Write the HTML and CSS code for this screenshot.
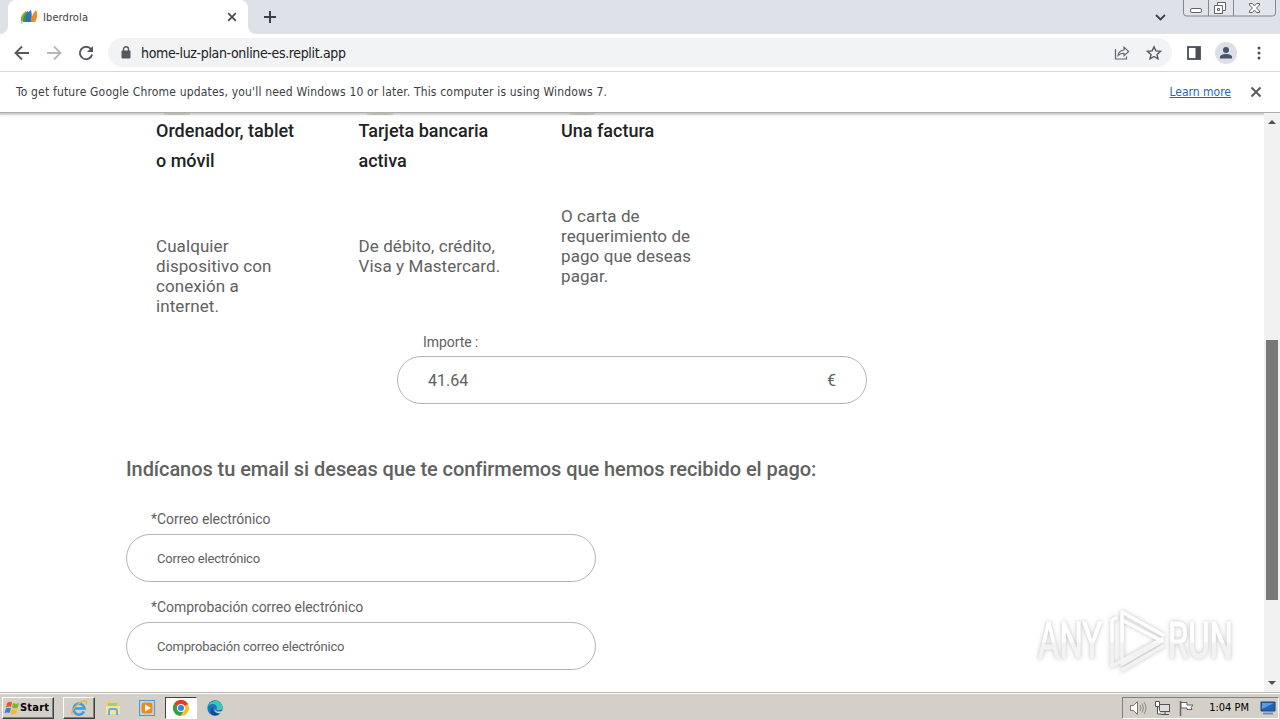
FILE: index.html
```html
<!DOCTYPE html>
<html lang="es">
<head>
    <meta charset="UTF-8">
    <meta name="viewport" content="width=device-width, initial-scale=1.0">
    <title>Iberdrola</title>
    <link rel="stylesheet" href="styles.css">
</head>
<body>
    <div class="screen">
        <!-- Tab strip -->
        <div class="tab-strip">
            <div class="strip-left"></div>
            <div class="tab">
                <svg class="favicon" width="18" height="16" viewBox="0 0 18 16">
                    <path d="M1 12C0 8 3 4 6 2c2 3 1 8 0 11z" fill="#7fae3c"/>
                    <path d="M3 13C3 8 5 4 8 2l1 11z" fill="#3f8f55"/>
                    <path d="M6 13C5 8 7 3 11 1c1 4 1 9 0 12z" fill="#3173b5"/>
                    <path d="M11 13c0-5 2-9 5-12 2 4 1 9-1 12z" fill="#f08a1d"/>
                    <path d="M1.500 12l.5 3" stroke="#9ab88a" fill="none"/>
                </svg>
                <span class="tab-title">Iberdrola</span>
                <svg class="tab-close" width="10" height="10" viewBox="0 0 10 10"><path d="M1.200 1.200l7.600 7.600M8.800 1.200L1.200 8.800" stroke="#45494d" stroke-width="1.700"/></svg>
            </div>
            <div class="strip-right">
                <svg class="new-tab" width="12" height="12" viewBox="0 0 12 12"><path d="M6 0v12M0 6h12" stroke="#3c4043" stroke-width="2"/></svg>
                <svg class="tab-search" width="11" height="7" viewBox="0 0 11 7"><path d="M1 1l4.500 4.500L10 1" fill="none" stroke="#3c4043" stroke-width="1.800"/></svg>
                <svg class="window-buttons" width="94" height="17" viewBox="0 0 94 17">
                    <path d="M.5 0v13q0 3 3 3h86q3 0 3-3V0M25.500 0v16M50.500 0v16" fill="#e1e4ea" stroke="#85888e"/>
                    <rect x="7.500" y="8.500" width="11" height="4" rx="1.500" fill="#fff" stroke="#60646a"/>
                    <path d="M34.500 2.500h8v8h-3v3h-8v-8h3z" fill="#fff" stroke="#60646a"/>
                    <path d="M34.500 5.500h5v5M34.500 8.500h2v2h-2z" fill="none" stroke="#60646a"/>
                    <path d="M66.500 3.500h3l2 2.500 2-2.500h3v1.500l-3 3 3 3v1.500h-3l-2-2.500-2 2.500h-3V11l3-3-3-3z" fill="#fff" stroke="#60646a"/>
                </svg>
            </div>
        </div>

        <!-- Toolbar -->
        <div class="toolbar">
            <svg class="back" width="16" height="16" viewBox="0 0 16 16"><path d="M15 8H2M8 1.500L1.500 8 8 14.500" fill="none" stroke="#55585c" stroke-width="1.800"/></svg>
            <svg class="forward" width="16" height="16" viewBox="0 0 16 16"><path d="M1 8h13M8 1.500L14.500 8 8 14.500" fill="none" stroke="#b5b7ba" stroke-width="1.800"/></svg>
            <svg class="reload" width="16" height="16" viewBox="0 0 16 16"><path d="M13 4.200A6.200 6.200 0 1 0 14.100 9.500" fill="none" stroke="#55585c" stroke-width="1.900"/><path d="M15 1v6H9z" fill="#55585c"/></svg>
            <div class="address-bar">
                <svg class="lock" width="10" height="13" viewBox="0 0 10 13"><rect x=".5" y="4.500" width="9" height="8" rx="1" fill="#55585c"/><path d="M2.500 5V3.300a2.500 2.500 0 0 1 5 0V5" fill="none" stroke="#55585c" stroke-width="1.400"/></svg>
                <span class="url">home-luz-plan-online-es.replit.app</span>
                <svg class="share" width="16" height="14" viewBox="0 0 16 14"><path d="M1.500 3v10h11v-2.500" fill="none" stroke="#5f6368" stroke-width="1.200"/><path d="M4 9.500C4.500 6 7 4.200 10 4V1.200l4.700 4.300L10 9.700V7.200C7.500 7.200 5.500 8 4 9.500z" fill="none" stroke="#5f6368" stroke-width="1.100"/></svg>
                <svg class="star" width="16" height="16" viewBox="0 0 16 16"><path d="M8 1.800l1.900 4.100 4.500.5-3.400 3 1 4.400L8 11.500l-4 2.300 1-4.400-3.400-3 4.500-.5z" fill="none" stroke="#55585c" stroke-width="1.400"/></svg>
            </div>
            <svg class="side-panel" width="14" height="14" viewBox="0 0 14 14"><rect x="1" y="1" width="12" height="12" fill="none" stroke="#4b4e52" stroke-width="1.800"/><path d="M8.500 1H13v12H8.500z" fill="#4b4e52"/></svg>
            <svg class="profile" width="22" height="22" viewBox="0 0 22 22"><circle cx="11" cy="11" r="11" fill="#dcdfe5"/><circle cx="11" cy="8" r="3" fill="#46536b"/><path d="M5 16.500v-1.500c0-4 12-4 12 0v1.500z" fill="#46536b"/></svg>
            <svg class="dots" width="4" height="14" viewBox="0 0 4 14"><g fill="#4b4e52"><circle cx="2" cy="2" r="1.500"/><circle cx="2" cy="7" r="1.500"/><circle cx="2" cy="12" r="1.500"/></g></svg>
        </div>

        <div class="infobar">
            <span class="infobar-text">To get future Google Chrome updates, you'll need Windows 10 or later. This computer is using Windows 7.</span>
            <a class="learn-more">Learn more</a>
            <svg class="infobar-close" width="12" height="12" viewBox="0 0 12 12"><path d="M1.500 1.500l9 9M10.500 1.500l-9 9" stroke="#55585c" stroke-width="1.800"/></svg>
        </div>

        <!-- Page -->
        <div class="viewport">
            <div class="page">
                <div class="requirements">
                    <div class="requirement">
                        <h3>Ordenador, tablet<br>o móvil</h3>
                        <p>Cualquier<br>dispositivo con<br>conexión a<br>internet.</p>
                    </div>
                    <div class="requirement">
                        <h3>Tarjeta bancaria<br>activa</h3>
                        <p>De débito, crédito,<br>Visa y Mastercard.</p>
                    </div>
                    <div class="requirement">
                        <h3>Una factura</h3>
                        <p>O carta de<br>requerimiento de<br>pago que deseas<br>pagar.</p>
                    </div>
                </div>
                <div class="field amount">
                    <label>Importe :</label>
                    <div class="input"><span>41.64</span><span>€</span></div>
                </div>
                <h2>Indícanos tu email si deseas que te confirmemos que hemos recibido el pago:</h2>
                <div class="field">
                    <label>*Correo electrónico</label>
                    <div class="input"><span class="placeholder">Correo electrónico</span></div>
                </div>
                <div class="field">
                    <label>*Comprobación correo electrónico</label>
                    <div class="input"><span class="placeholder">Comprobación correo electrónico</span></div>
                </div>
            </div>
            <div class="scrollbar">
                <svg class="arrow" width="8" height="4" viewBox="0 0 8 4"><path d="M0 4l4-4 4 4z" fill="#505050"/></svg>
                <div class="thumb"></div>
                <svg class="arrow" width="8" height="4" viewBox="0 0 8 4"><path d="M0 0l4 4 4-4z" fill="#505050"/></svg>
            </div>
            <svg class="watermark" width="234" height="80" viewBox="0 0 234 80">
                <defs>
                    <linearGradient id="fade" gradientUnits="userSpaceOnUse" x1="0" y1="0" x2="0" y2="80">
                        <stop offset="0.52" stop-color="#fff"/>
                        <stop offset="0.54" stop-color="#f3f3f3"/>
                        <stop offset="1" stop-color="#f3f3f3"/>
                    </linearGradient>
                </defs>
                <g class="watermark-text" fill="url(#fade)" stroke="url(#fade)">
                    <text x="8" y="58" textLength="64" lengthAdjust="spacingAndGlyphs">ANY</text>
                    <text x="138" y="58" textLength="65" lengthAdjust="spacingAndGlyphs">RUN</text>
                </g>
                <path class="watermark-logo" stroke="url(#fade)" d="M92 58V12l41 23M92 20l40 21-40 23M86 18l-4 2v46l50-27M92 70l41-24"/>
            </svg>
        </div>

        <!-- Taskbar -->
        <div class="taskbar">
            <div class="start">
                <svg width="16" height="16" viewBox="0 0 16 16"><path d="M3 3q3-2 5-.5L7 7Q5 6 2 7.500z" fill="#e8562a"/><path d="M9 3q3 1.500 6 0l-1.500 5Q11 9 8 7.500z" fill="#7db734"/><path d="M2 8.500Q5 7 7 8.500L5.500 13Q3 12 .5 13z" fill="#3a7fd0"/><path d="M8 9q3 1.300 5.500 0L12 14q-3 1-5.500-.5z" fill="#f6bb25"/></svg>
                <span>Start</span>
            </div>
            <div class="task raised">
                <svg width="18" height="18" viewBox="0 0 18 18"><path d="M14 12.500A5.500 5.500 0 1 1 14.500 9.500H5" fill="none" stroke="#3d9fdf" stroke-width="2.600"/><path d="M2.500 16C-1 13 9 2 15 2c2 0 2 1 1 3" fill="none" stroke="#e5b43a" stroke-width="1.300"/></svg>
            </div>
            <div class="task">
                <svg width="16" height="16" viewBox="0 0 16 16"><path d="M1 3l1-2h4l1 1.500h7V14H1z" fill="#eccf70"/><path d="M3 3h9v3H3z" fill="#9ccf83"/><path d="M1 6h14v8H1z" fill="#f7e39c"/><path d="M4 15v-4q0-2 2-2h4q2 0 2 2v4" fill="none" stroke="#65aedb" stroke-width="2"/></svg>
            </div>
            <div class="task">
                <svg width="16" height="16" viewBox="0 0 16 16"><rect x=".5" y=".5" width="15" height="15" fill="#b9d8f0" stroke="#5b93c2"/><rect x="2.500" y="2.500" width="11" height="11" rx="3" fill="#f08a17"/><path d="M6 4.500v7L12 8z" fill="#fff"/></svg>
            </div>
            <div class="task pressed">
                <svg width="16" height="16" viewBox="0 0 16 16"><circle cx="8" cy="8" r="8" fill="#fbc116"/><path d="M8 8L1 4a8 8 0 0 1 14 0z" fill="#e33b2e"/><path d="M1 4a8 8 0 0 0 6.500 12L11 10 8 8z" fill="#2da14c"/><circle cx="8" cy="8" r="4" fill="#fff"/><circle cx="8" cy="8" r="3" fill="#3f7de0"/></svg>
            </div>
            <div class="task">
                <svg width="16" height="16" viewBox="0 0 16 16"><circle cx="8" cy="8" r="7.700" fill="#1874c4"/><path d="M.5 7C2 0 14-2 15.700 7c.3 3-4 4-6.500 2.500C11 7 9 4 6 4 3 4 1 5.500.5 7z" fill="#3fc7b5"/><path d="M6.500 7c-2 4 2 7 7 5.500-2 3-6 3.500-8 2.500-3-1.500-2.500-6.500 1-8z" fill="#0d4f9b"/><path d="M8 7.500c-1 3 2 5 7 3.500v2c-4 1.500-9-1-7-5.500z" fill="#d4d0c8"/></svg>
            </div>
            <div class="tray">
                <svg width="18" height="16" viewBox="0 0 18 16"><path d="M1.500 5.500h3l4-4v13l-4-4h-3z" fill="#fff" stroke="#77746e"/><path d="M11 5q2 3 0 6M13 3.500q3 4.500 0 9M15 2q4 6 0 12" fill="none" stroke="#8a8781"/></svg>
                <svg width="17" height="16" viewBox="0 0 17 16"><rect x="5.500" y="4.500" width="10" height="7" fill="#ddd" stroke="#55534e"/><path d="M7 14.500h8M11 12v2M3.500 7v7H7M1.500 1.500h4v5h-4z" fill="#fff" stroke="#55534e"/></svg>
                <svg width="17" height="16" viewBox="0 0 17 16"><path d="M2.500 1v15" stroke="#66635e" stroke-width="1.500"/><path d="M3 2.500h6V5h6l-2 2.500 1 2H9v-1.500H3z" fill="#fff" stroke="#66635e"/></svg>
                <span class="clock">1:04 PM</span>
                <svg width="16" height="14" viewBox="0 0 16 14"><path d="M1 1h14v9H1z" fill="#1d63b8" stroke="#23456f"/><path d="M2 2h12L2 8z" fill="#5b9ce0"/><path d="M3 12.500h10" stroke="#6c8db8" stroke-width="2"/></svg>
            </div>
        </div>
    </div>
</body>
</html>
```
FILE: styles.css
```css
* {
    margin: 0;
    padding: 0;
    box-sizing: border-box;
}

body {
    font-family: "DejaVu Sans Condensed", "DejaVu Sans", sans-serif;
    background-color: #fff;
    overflow: hidden;
}

svg {
    display: block;
    flex: none;
}

.screen {
    width: 1280px;
    height: 720px;
    display: flex;
    flex-direction: column;
}

.tab-strip {
    height: 34px;
    flex: none;
    display: flex;
    background: linear-gradient(#dee1e8 50%, #fff 50%);
}

.strip-left {
    width: 8px;
    background-color: #dee1e8;
    border-bottom-right-radius: 8px;
}

.strip-right {
    flex: 1;
    display: flex;
    align-items: center;
    background-color: #dee1e8;
    border-bottom-left-radius: 8px;
}

.tab {
    width: 240px;
    height: 34px;
    padding: 0 11px 0 12px;
    display: flex;
    align-items: center;
    background-color: #fff;
    border-radius: 8px 8px 0 0;
}

.tab-title {
    margin-left: 5px;
    font-size: 11px;
    letter-spacing: 0.1px;
    color: #3c4043;
}

.tab-close {
    margin-left: auto;
}

.new-tab {
    margin-left: 16px;
}

.tab-search {
    margin-left: auto;
    margin-right: 17px;
}

.window-buttons {
    align-self: flex-start;
    margin-right: 3px;
}

.toolbar {
    height: 38px;
    flex: none;
    display: flex;
    align-items: center;
    padding-left: 14px;
    border-bottom: 1px solid #d8d9db;
}

.forward, .reload {
    margin-left: 16px;
}

.address-bar {
    width: 1064px;
    height: 29px;
    margin-left: 14px;
    padding: 0 10px 0 13px;
    display: flex;
    align-items: center;
    background-color: #f1f3f4;
    border-radius: 15px;
}

.url {
    margin-left: 10px;
    font-size: 14px;
    letter-spacing: -0.35px;
    color: #202124;
    white-space: nowrap;
}

.share {
    margin-left: auto;
}

.star {
    margin-left: 16px;
}

.side-panel {
    margin-left: 15px;
}

.profile {
    margin-left: 14px;
}

.dots {
    margin-left: 20px;
}

.infobar {
    height: 41px;
    flex: none;
    display: flex;
    align-items: center;
    padding: 0 18px 0 16px;
    font-size: 12px;
    color: #3c4043;
    border-bottom: 1px solid #aeaeae;
    white-space: nowrap;
}

.infobar-text {
    letter-spacing: 0.17px;
}

.learn-more {
    margin-left: auto;
    color: #1a67c2;
    text-decoration: underline;
}

.infobar-close {
    margin-left: 19px;
}

.viewport {
    position: relative;
    height: 579px;
    flex: none;
    display: flex;
    box-shadow: inset 0 3px 2px -1px #ccc;
}

.page {
    flex: 1;
    padding-left: 126px;
    font-family: Roboto, sans-serif;
    color: #616161;
}

.requirements {
    height: 209px;
    display: flex;
}

.requirement {
    width: 202.5px;
    padding-left: 30px;
    white-space: nowrap;
}

/* bottom edge of the round icon scrolled out above */
.requirement::before {
    content: "";
    display: block;
    width: 26px;
    height: 2px;
    margin: 0 0 1px 8px;
    background-color: #bcbcb0;
    border-radius: 0 0 50% 50%;
}

.requirement h3 {
    font-size: 18px;
    line-height: 30px;
    font-weight: 500;
    color: #222;
}

.requirement p {
    margin-top: 60px;
    font-size: 17px;
    line-height: 20px;
    letter-spacing: 0.08px;
}

.field {
    width: 470px;
    height: 88px;
}

.field label {
    display: block;
    height: 34px;
    padding-left: 25px;
    font-size: 14px;
    line-height: 38px;
    letter-spacing: -0.06px;
}

.amount {
    margin-left: 271px;
}

.amount label {
    padding-left: 26px;
    line-height: 40px;
}

.input {
    height: 48px;
    display: flex;
    align-items: center;
    justify-content: space-between;
    padding: 0 30px;
    border: 1px solid #b5b5b5;
    border-radius: 24px;
    font-size: 16px;
}

.placeholder {
    font-size: 13px;
    letter-spacing: -0.19px;
}

.page h2 {
    margin: 44px 0 16px;
    font-size: 20px;
    line-height: 30px;
    font-weight: 500;
    letter-spacing: -0.065px;
    white-space: nowrap;
}

.scrollbar {
    width: 16px;
    display: flex;
    flex-direction: column;
    align-items: center;
    padding: 7px 0;
    background-color: #f1f1f1;
}

.thumb {
    width: 12px;
    height: 260px;
    margin-top: 216px;
    margin-bottom: auto;
    background-color: #787878;
}

.watermark {
    position: absolute;
    left: 1030px;
    top: 487px;
    filter: drop-shadow(0 0 2px rgba(0, 0, 0, 0.25));
}

.watermark-text {
    font-family: Roboto, sans-serif;
    font-size: 50px;
    stroke-width: 1;
}

.watermark-logo {
    fill: none;
    stroke-width: 3.5;
    stroke-linejoin: round;
    stroke-linecap: round;
}

.taskbar {
    height: 28px;
    flex: none;
    display: flex;
    align-items: center;
    padding: 3px 1px 1px 2px;
    background-color: #d4d0c8;
    border-top: 1px solid #b9b6b0;
    box-shadow: inset 0 1px 0 #fff;
}

.start {
    width: 52px;
    height: 22px;
    display: flex;
    align-items: center;
    padding-left: 1px;
    margin-right: 9px;
    border: 1px solid;
    border-color: #fff #404040 #404040 #fff;
    box-shadow: inset -1px -1px 0 #808080;
    font-size: 11px;
    font-weight: bold;
    letter-spacing: 0.2px;
    color: #000;
}

.task {
    width: 32px;
    height: 22px;
    margin-right: 2px;
    display: flex;
    align-items: center;
    justify-content: center;
}

.raised {
    border: 1px solid;
    border-color: #fff #404040 #404040 #fff;
    box-shadow: inset -1px -1px 0 #808080;
}

.pressed {
    background-color: #fff;
    border: 1px solid;
    border-color: #404040 #fff #fff #404040;
}

.tray {
    width: 157px;
    height: 22px;
    margin-left: auto;
    padding: 0 2px 0 6px;
    display: flex;
    align-items: center;
    gap: 7px;
    border: 1px solid;
    border-color: #808080 #fff #fff #808080;
}

.clock {
    margin-left: auto;
    margin-right: 4px;
    font-size: 11px;
    color: #000;
    white-space: nowrap;
}
```
